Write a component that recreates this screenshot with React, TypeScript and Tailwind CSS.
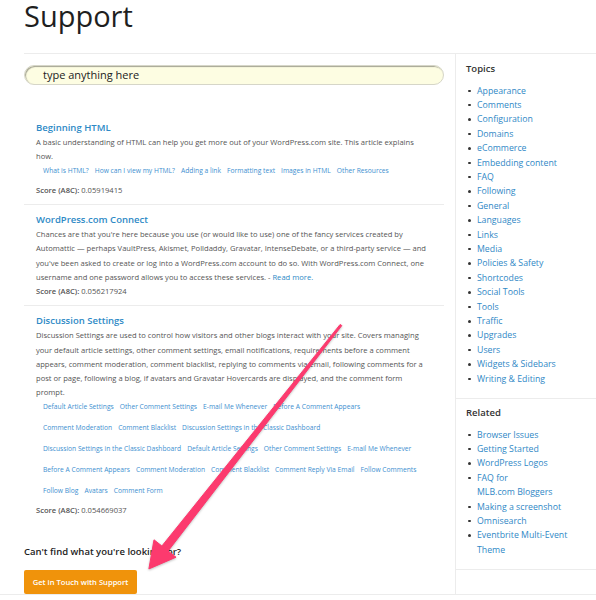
import React from 'react';

const topics = [
  'Appearance', 'Comments', 'Configuration', 'Domains', 'eCommerce', 'Embedding content', 'FAQ',
  'Following', 'General', 'Languages', 'Links', 'Media', 'Policies & Safety', 'Shortcodes',
  'Social Tools', 'Tools', 'Traffic', 'Upgrades', 'Users', 'Widgets & Sidebars', 'Writing & Editing',
];

const related = [
  'Browser Issues', 'Getting Started', 'WordPress Logos', 'FAQ for\nMLB.com Bloggers',
  'Making a screenshot', 'Omnisearch', 'Eventbrite Multi-Event\nTheme',
];

const results = [
  {
    title: 'Beginning HTML',
    body: (
      <>A basic understanding of HTML can help you get more out of your WordPress.com site. This article explains how.</>
    ),
    links: [['What is HTML?', 'How can I view my HTML?', 'Adding a link', 'Formatting text', 'Images in HTML', 'Other Resources']],
    score: '0.05919415',
  },
  {
    title: 'WordPress.com Connect',
    body: (
      <>
        Chances are that you're here because you use (or would like to use) one of the fancy services created by
        Automattic — perhaps VaultPress, Akismet, Polldaddy, Gravatar, IntenseDebate, or a third-party service — and
        you've been asked to create or log into a WordPress.com account to do so. With WordPress.com Connect, one
        username and one password allows you to access these services. - <span className="text-[#2e8ac6]">Read more.</span>
      </>
    ),
    links: [],
    score: '0.056217924',
  },
  {
    title: 'Discussion Settings',
    body: (
      <>
        Discussion Settings are used to control how visitors and other blogs interact with your site. Covers managing
        your default article settings, other comment settings, email notifications, requirements before a comment
        appears, comment moderation, comment blacklist, replying to comments via email, following comments for a
        post or page, following a blog, if avatars and Gravatar Hovercards are displayed, and the comment form
        prompt.
      </>
    ),
    links: [
      ['Default Article Settings', 'Other Comment Settings', 'E-mail Me Whenever', 'Before A Comment Appears'],
      ['Comment Moderation', 'Comment Blacklist', 'Discussion Settings in the Classic Dashboard'],
      ['Discussion Settings in the Classic Dashboard', 'Default Article Settings', 'Other Comment Settings', 'E-mail Me Whenever'],
      ['Before A Comment Appears', 'Comment Moderation', 'Comment Blacklist', 'Comment Reply Via Email', 'Follow Comments'],
      ['Follow Blog', 'Avatars', 'Comment Form'],
    ],
    score: '0.054669037',
  },
];

const SideList = ({ items }: { items: string[] }) => (
  <ul className="mt-[7.5px]">
    {items.map((t) => (
      <li key={t} className="flex text-[8.75px] leading-[14.4px] text-[#2f88c6]">
        <span className="w-[11px] shrink-0 pt-[6px] pl-[2px]">
          <span className="block w-[2.5px] h-[2.5px] rounded-full bg-[#333]" />
        </span>
        <span className="whitespace-pre-line">{t}</span>
      </li>
    ))}
  </ul>
);

export default function App() {
  return (
    <div className="relative w-[596px] h-[600px] overflow-hidden bg-white font-['Open_Sans','Liberation_Sans',sans-serif]">
      <div className="pl-6">
        {/* Header */}
        <div className="h-[54px] border-b border-[#ececec]">
          <h1 className="text-[29px] leading-[32px] text-[#1f1f1f]">Support</h1>
        </div>

        <div className="flex h-[540px]">
          {/* Main column */}
          <div className="w-[432px] shrink-0 border-r border-[#ececec] pr-[11px]">
            <div className="mt-[11px] w-[420px] h-[20px] rounded-full bg-[#fdfde2] border border-[#d6d6c8] shadow-[inset_1px_1px_1px_rgba(0,0,0,0.35)] pl-[18px] flex items-center">
              <span className="text-[11px] text-[#222]">type anything here</span>
            </div>

            <div className="mt-[28px]">
              {results.map((r, i) => (
                <div
                  key={r.title}
                  className={`px-3 pt-[8px] pb-[7px] ${i < results.length - 1 ? 'border-b border-[#ececec]' : ''}`}
                >
                  <h3 className="text-[9.5px] leading-[14px] font-semibold text-[#2e8ac6]">{r.title}</h3>
                  <p className="text-[7.6px] leading-[14.3px] text-[#555]">{r.body}</p>
                  {r.links.length > 0 && (
                    <div className="pl-[7px] flex flex-col gap-y-[8px]">
                      {r.links.map((row, j) => (
                        <div key={j} className="flex gap-x-[6px] text-[6.7px] leading-[13px] text-[#3d8fd0] whitespace-nowrap">
                          {row.map((l, k) => (
                            <span key={k}>{l}</span>
                          ))}
                        </div>
                      ))}
                    </div>
                  )}
                  <p className={`${r.links.length > 0 ? 'mt-[6.5px]' : ''} text-[7.6px] leading-[14px] text-[#555]`}>
                    <span className="font-semibold">Score (A8C):</span> {r.score}
                  </p>
                </div>
              ))}
            </div>

            <p className="mt-[21px] text-[9.5px] leading-[14px] font-semibold text-[#222]">Can't find what you're looking for?</p>
            <button className="mt-[11px] w-[113px] h-[24px] rounded-[2px] bg-[#f0930b] text-white text-[7.6px] font-semibold">
              Get in Touch with Support
            </button>
          </div>

          {/* Sidebar */}
          <div className="flex-1">
            <div className="pl-[10px] pt-[8px] pb-[12px] border-b border-[#ececec]">
              <h4 className="text-[9.5px] leading-[14px] font-semibold text-[#333]">Topics</h4>
              <SideList items={topics} />
            </div>
            <div className="pl-[10px] pt-[7px] pb-[12px] border-b border-[#ececec]">
              <h4 className="text-[9.5px] leading-[14px] font-semibold text-[#333]">Related</h4>
              <SideList items={related} />
            </div>
          </div>
        </div>
      </div>
      <div className="border-t border-[#ececec]" />

      {/* Annotation arrow */}
      <svg className="absolute left-0 top-0 pointer-events-none" width="596" height="600" viewBox="0 0 596 600">
        <polygon
          points="340.2,324.4 161.9,546 154,539.8 148.9,568.9 176,557.2 168.1,551 341.8,325.6"
          fill="#fc3a6e"
          stroke="#fc3a6e"
          strokeWidth="1"
          strokeLinejoin="round"
          style={{ filter: 'drop-shadow(0 1px 1px rgba(0,0,0,0.25))' }}
        />
      </svg>
    </div>
  );
}
